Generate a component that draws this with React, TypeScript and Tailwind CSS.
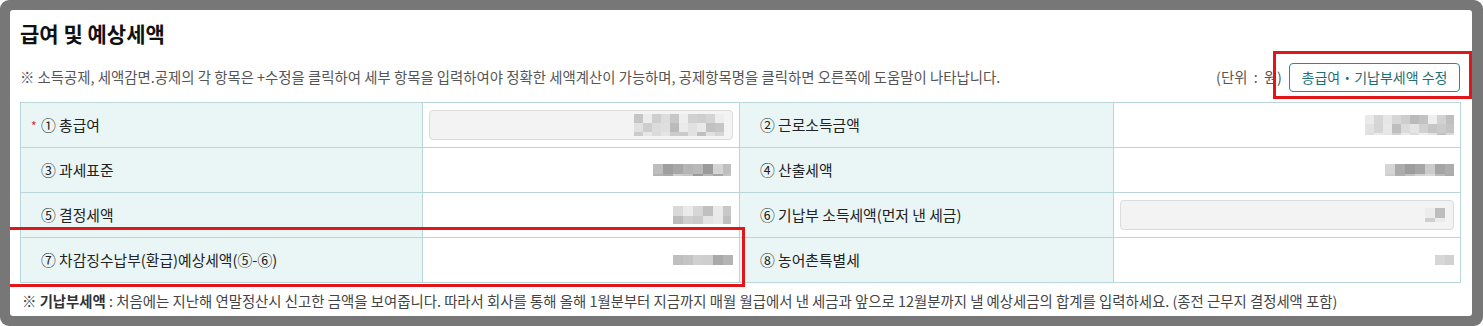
import React from "react";

function Mosaic({ w, h, b = 9, seed = 1, dark = false }: { w: number; h: number; b?: number; seed?: number; dark?: boolean }) {
  const cols = Math.ceil(w / b);
  const rows = Math.ceil(h / b);
  const rects: React.ReactNode[] = [];
  let s = seed * 9301 + 49297;
  const rnd = () => {
    s = (s * 9301 + 49297) % 233280;
    return s / 233280;
  };
  for (let r = 0; r < rows; r++) {
    for (let c = 0; c < cols; c++) {
      const base = dark ? 150 : 185;
      const v = Math.round(base + rnd() * (dark ? 70 : 55));
      rects.push(<rect key={r + "-" + c} x={c * b} y={r * b} width={b} height={b} fill={`rgb(${v},${v},${v})`} />);
    }
  }
  return (
    <svg width={w} height={h} viewBox={`0 0 ${w} ${h}`} className="block shrink-0">
      {rects}
    </svg>
  );
}

const font = "font-['Malgun_Gothic','Noto_Sans_CJK_KR',sans-serif]";

function Label({ children, req = false }: { children: React.ReactNode; req?: boolean }) {
  return (
    <td className="relative border border-[#b9d7da] bg-[#eaf6f6] pl-[20px] text-[14.8px] leading-[20px] text-[#222]">
      {req && <span className="absolute left-[10px] top-[13px] text-[12px] text-[#e0204a]">*</span>}
      {children}
    </td>
  );
}

function Value({ children }: { children: React.ReactNode }) {
  return (
    <td className="border border-[#b9d7da] bg-white px-[6px]">
      <div className="flex items-center justify-end">{children}</div>
    </td>
  );
}

function InputBox({ children }: { children: React.ReactNode }) {
  return (
    <div className="flex h-[30px] w-full items-center justify-end rounded-[4px] border border-[#dcdcdc] bg-[#f3f3f3] pr-[8px]">
      {children}
    </div>
  );
}

export default function App() {
  return (
    <div className={`h-[326px] w-[1483px] bg-white ${font}`}>
      <div className="h-full rounded-[9px] bg-[#777777] pb-[10px] pl-[10px] pr-[11px] pt-[10px]">
        <div className="relative h-full rounded-[3px] bg-white pl-[10px] pr-[12px]">
          <div className="pt-[9px] text-[21px] font-bold leading-[28px] text-[#111]">급여 및 예상세액</div>
          <div className="mb-[11px] mt-[16px] flex h-[28px] items-center">
            <div className="flex-1 text-[14.4px] leading-[20px] text-[#555]">
              ※ 소득공제, 세액감면.공제의 각 항목은 +수정을 클릭하여 세부 항목을 입력하여야 정확한 세액계산이 가능하며, 공제항목명을 클릭하면 오른쪽에 도움말이 나타납니다.
            </div>
            <div className="mr-[7px] text-[14.4px] leading-[20px] text-[#555] [word-spacing:3px]">(단위 : 원)</div>
            <button className="h-[29px] w-[171px] rounded-[4px] border border-[#2b8a91] bg-white text-[14px] leading-[20px] text-[#1d6f76]">
              총급여・기납부세액 수정
            </button>
          </div>
          <table className="w-[1440px] table-fixed border-collapse">
            <colgroup>
              <col className="w-[402px]" />
              <col className="w-[317px]" />
              <col className="w-[374px]" />
              <col className="w-[347px]" />
            </colgroup>
            <tbody>
              <tr className="h-[45px]">
                <Label req>① 총급여</Label>
                <Value>
                  <InputBox>
                    <Mosaic w={90} h={22} seed={3} />
                  </InputBox>
                </Value>
                <Label>② 근로소득금액</Label>
                <Value>
                  <Mosaic w={89} h={20} seed={5} />
                </Value>
              </tr>
              <tr className="h-[45px]">
                <Label>③ 과세표준</Label>
                <Value>
                  <div className="pr-[2px]">
                    <Mosaic w={78} h={12} b={10} seed={7} dark />
                  </div>
                </Value>
                <Label>④ 산출세액</Label>
                <Value>
                  <Mosaic w={69} h={12} b={10} seed={11} dark />
                </Value>
              </tr>
              <tr className="h-[45px]">
                <Label>⑤ 결정세액</Label>
                <Value>
                  <div className="pr-[2px]">
                    <Mosaic w={58} h={18} b={10} seed={13} />
                  </div>
                </Value>
                <Label>⑥ 기납부 소득세액(먼저 낸 세금)</Label>
                <Value>
                  <InputBox>
                    <Mosaic w={20} h={14} b={10} seed={17} />
                  </InputBox>
                </Value>
              </tr>
              <tr className="h-[45px]">
                <Label>⑦ 차감징수납부(환급)예상세액(⑤-⑥)</Label>
                <Value>
                  <Mosaic w={60} h={10} b={10} seed={19} dark />
                </Value>
                <Label>⑧ 농어촌특별세</Label>
                <Value>
                  <Mosaic w={19} h={10} b={10} seed={23} dark />
                </Value>
              </tr>
            </tbody>
          </table>
          <div className="pl-[2px] pt-[8px] text-[14.4px] leading-[20px] text-[#444]">
            ※ <span className="font-bold text-[#333]">기납부세액</span> : 처음에는 지난해 연말정산시 신고한 금액을 보여줍니다. 따라서 회사를 통해 올해 1월분부터 지금까지 매월 월급에서 낸 세금과 앞으로 12월분까지 낼 예상세금의 합계를 입력하세요. (종전 근무지 결정세액 포함)
          </div>
          <div className="pointer-events-none absolute left-[1263px] top-[41px] h-[48px] w-[199px] border-[3px] border-[#e0161b]" />
          <div className="pointer-events-none absolute left-0 top-[217px] h-[60px] w-[735px] border-b-[3px] border-r-[3px] border-t-[3px] border-[#e0161b]" />
        </div>
      </div>
    </div>
  );
}
